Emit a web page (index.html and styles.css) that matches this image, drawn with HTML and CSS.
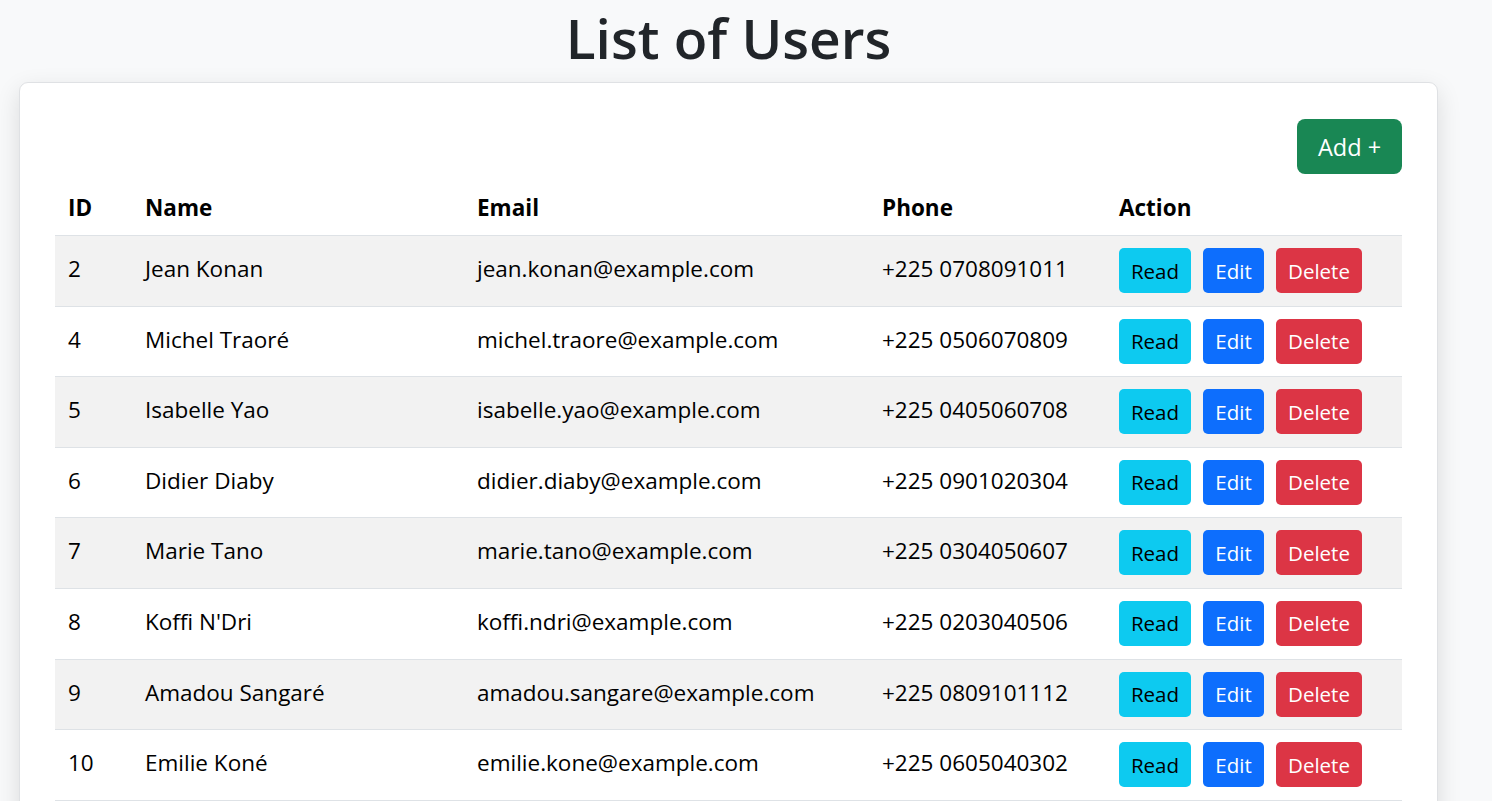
FILE: index.html
```html
<!DOCTYPE html>
<html lang="en">
<head>
<meta charset="utf-8">
<title>List of Users</title>
<link rel="stylesheet" href="styles.css">
</head>
<body>
<div class="page">
  <h1 class="title">List of Users</h1>
  <div class="card">
    <div class="toolbar">
      <button class="btn btn-add">Add +</button>
    </div>
    <table class="users">
      <colgroup>
        <col class="c-id"><col class="c-name"><col class="c-email"><col class="c-phone"><col class="c-action">
      </colgroup>
      <thead>
        <tr><th>ID</th><th>Name</th><th>Email</th><th>Phone</th><th>Action</th></tr>
      </thead>
      <tbody>
        <tr><td>2</td><td>Jean Konan</td><td>jean.konan@example.com</td><td>+225 0708091011</td><td class="cell-actions"><div class="actions"><button class="btn btn-sm btn-read">Read</button><button class="btn btn-sm btn-edit">Edit</button><button class="btn btn-sm btn-delete">Delete</button></div></td></tr>
        <tr><td>4</td><td>Michel Traoré</td><td>michel.traore@example.com</td><td>+225 0506070809</td><td class="cell-actions"><div class="actions"><button class="btn btn-sm btn-read">Read</button><button class="btn btn-sm btn-edit">Edit</button><button class="btn btn-sm btn-delete">Delete</button></div></td></tr>
        <tr><td>5</td><td>Isabelle Yao</td><td>isabelle.yao@example.com</td><td>+225 0405060708</td><td class="cell-actions"><div class="actions"><button class="btn btn-sm btn-read">Read</button><button class="btn btn-sm btn-edit">Edit</button><button class="btn btn-sm btn-delete">Delete</button></div></td></tr>
        <tr><td>6</td><td>Didier Diaby</td><td>didier.diaby@example.com</td><td>+225 0901020304</td><td class="cell-actions"><div class="actions"><button class="btn btn-sm btn-read">Read</button><button class="btn btn-sm btn-edit">Edit</button><button class="btn btn-sm btn-delete">Delete</button></div></td></tr>
        <tr><td>7</td><td>Marie Tano</td><td>marie.tano@example.com</td><td>+225 0304050607</td><td class="cell-actions"><div class="actions"><button class="btn btn-sm btn-read">Read</button><button class="btn btn-sm btn-edit">Edit</button><button class="btn btn-sm btn-delete">Delete</button></div></td></tr>
        <tr><td>8</td><td>Koffi N'Dri</td><td>koffi.ndri@example.com</td><td>+225 0203040506</td><td class="cell-actions"><div class="actions"><button class="btn btn-sm btn-read">Read</button><button class="btn btn-sm btn-edit">Edit</button><button class="btn btn-sm btn-delete">Delete</button></div></td></tr>
        <tr><td>9</td><td>Amadou Sangaré</td><td>amadou.sangare@example.com</td><td>+225 0809101112</td><td class="cell-actions"><div class="actions"><button class="btn btn-sm btn-read">Read</button><button class="btn btn-sm btn-edit">Edit</button><button class="btn btn-sm btn-delete">Delete</button></div></td></tr>
        <tr><td>10</td><td>Emilie Koné</td><td>emilie.kone@example.com</td><td>+225 0605040302</td><td class="cell-actions"><div class="actions"><button class="btn btn-sm btn-read">Read</button><button class="btn btn-sm btn-edit">Edit</button><button class="btn btn-sm btn-delete">Delete</button></div></td></tr>
      </tbody>
    </table>
  </div>
</div>
</body>
</html>
```
FILE: styles.css
```css
* { box-sizing: border-box; }

html, body {
  margin: 0;
  padding: 0;
}

body {
  background: #f8f9fa;
  color: #212529;
  font-family: "Open Sans", "Noto Sans", sans-serif;
  font-size: 22.5px;
}

.page {
  width: 1419px;
  margin-left: 19px;
}

.title {
  margin: 0 0 6px;
  text-align: center;
  font-size: 55px;
  line-height: 76px;
  font-weight: 600;
  color: #212529;
}

.card {
  background: #fff;
  border: 1px solid #dfe1e4;
  border-radius: 9px;
  padding: 36px 35px 35px;
  box-shadow: 0 8px 24px rgba(0, 0, 0, 0.12);
}

.toolbar {
  display: flex;
  justify-content: flex-end;
  margin-bottom: 6px;
}

.btn {
  display: inline-flex;
  align-items: center;
  justify-content: center;
  border: none;
  font-family: inherit;
  cursor: pointer;
  color: #fff;
  padding: 0;
}

.btn-add {
  width: 105px;
  height: 55px;
  border-radius: 8px;
  background: #198754;
  font-size: 23.5px;
}

.users {
  width: 100%;
  border-collapse: collapse;
  table-layout: fixed;
  color: #000;
}

.c-id { width: 77px; }
.c-name { width: 332px; }
.c-email { width: 405px; }
.c-phone { width: 237px; }
.c-action { width: 296px; }

.users th,
.users td {
  text-align: left;
  padding: 11px 13px;
  line-height: 33px;
  border-bottom: 1px solid #dee2e6;
  vertical-align: middle;
  white-space: nowrap;
}

.users th {
  font-weight: 700;
}

.users td {
  padding: 10px 13px 14.6px;
}

.users td.cell-actions {
  padding: 12px 13px 12.6px;
}

.users tbody tr:nth-child(odd) td {
  background: #f2f2f2;
}

.actions {
  display: flex;
  gap: 12px;
}

.btn-sm {
  height: 45px;
  border-radius: 5px;
  font-size: 20.5px;
}

.btn-read {
  width: 72px;
  background: #0dcaf0;
  color: #000;
}

.btn-edit {
  width: 61px;
  background: #0d6efd;
}

.btn-delete {
  width: 86px;
  background: #dc3545;
}
```
